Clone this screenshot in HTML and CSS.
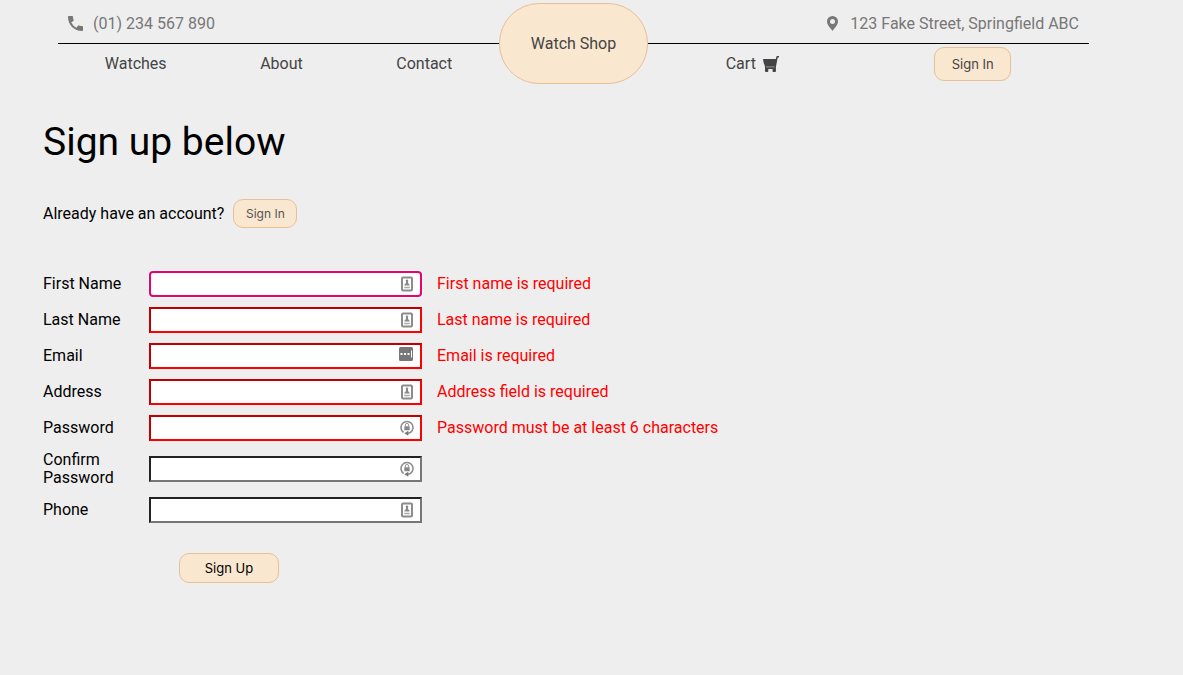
FILE: index.html
```html
<!DOCTYPE html>
<html lang="en">
<head>
  <meta charset="utf-8">
  <meta name="viewport" content="width=device-width, initial-scale=1">
  <title>Watch Shop</title>
  <link rel="stylesheet" href="styles.css">
</head>
<body>
  <svg class="sprite" aria-hidden="true">
    <symbol id="contact-card" viewBox="0 0 12 16">
      <rect x="1" y="1.500" width="10" height="13" rx="1" fill="#fff" stroke="#8c8c8c" stroke-width="2"/>
      <path d="M6 3.500a1.200 1.200 0 0 1 1 2V7l1.500 1.500V9.500h-5V8.500L5 7V5.500a1.200 1.200 0 0 1 1-2z" fill="#888"/>
      <path d="M3.200 11.500h5.600" stroke="#aaa" stroke-width="1.500"/>
    </symbol>
    <symbol id="lock-cycle" viewBox="0 0 14 16">
      <path d="M3.600 12.500A6 6 0 1 1 10.400 12.500L7.500 13.500" fill="none" stroke="#8e8e8e" stroke-width="1.600"/>
      <path d="M8.300 10.800v5L4.300 13.300z" fill="#777"/>
      <rect x="4.300" y="6.300" width="5.400" height="4" rx=".400" fill="#888"/>
      <path d="M5.400 6.500V5a1.600 1.600 0 0 1 3.200 0V6.500" fill="none" stroke="#999" stroke-width="1"/>
    </symbol>
  </svg>

  <header class="header">
    <div class="topbar">
      <span class="info">
        <svg class="icon" viewBox="0 0 15 15" aria-hidden="true"><path d="M0 .8Q0 0 .8 0H4.200Q5 0 5 .8Q5 2.500 5.600 4Q5.800 4.600 5.300 5L3.200 6.500Q5 10 8.500 11.800L10 9.700Q10.400 9.200 11 9.400Q12.500 10 14.200 10Q15 10 15 10.800V14.200Q15 15 14.200 15C6 15 0 9 0 .8z" fill="#777"/></svg>
        (01) 234 567 890
      </span>
      <span class="info">
        <svg class="icon" viewBox="0 0 15 15" aria-hidden="true"><path fill-rule="evenodd" d="M7.500 0A5.500 5.500 0 0 0 2 5.500C2 9 5.500 12 7.500 15C9.500 12 13 9 13 5.500A5.500 5.500 0 0 0 7.500 0zm0 3a2.500 2.500 0 1 1 0 5a2.500 2.500 0 1 1 0-5z" fill="#777"/></svg>
        123 Fake Street, Springfield ABC
      </span>
    </div>
    <nav class="nav nav-left">
      <a href="#watches">Watches</a>
      <a href="#about">About</a>
      <a href="#contact">Contact</a>
    </nav>
    <a class="logo" href="#home">Watch Shop</a>
    <nav class="nav nav-right">
      <a class="cart" href="#cart">Cart
        <svg class="cart-icon" viewBox="0 0 16 16" aria-hidden="true"><path d="M0 3H12.800L13.400 .800Q13.600 0 14.400 0H16V1.400H14.700L12.900 11V14.300A1.700 1.700 0 1 1 9.600 14V13H5.300V14A1.700 1.700 0 1 1 2 14V11L1.600 9Q.400 7 0 3z" fill="#444"/><path d="M3 10.900h8.500" stroke="#aaa" stroke-width=".8"/></svg>
      </a>
      <button class="button button-nav" type="button">Sign In</button>
    </nav>
  </header>

  <main class="main">
    <h1 class="title">Sign up below</h1>
    <p class="account">Already have an account? <button class="button button-small" type="button">Sign In</button></p>

    <form class="form">
      <div class="row">
        <label for="first">First Name</label>
        <span class="field"><input class="input focused" id="first" type="text"><svg class="hint" aria-hidden="true"><use href="#contact-card"/></svg></span>
        <span class="error">First name is required</span>
      </div>
      <div class="row">
        <label for="last">Last Name</label>
        <span class="field"><input class="input invalid" id="last" type="text"><svg class="hint" aria-hidden="true"><use href="#contact-card"/></svg></span>
        <span class="error">Last name is required</span>
      </div>
      <div class="row">
        <label for="email">Email</label>
        <span class="field"><input class="input invalid" id="email" type="email"><svg class="hint hint-email" viewBox="0 0 14 14" aria-hidden="true"><rect width="14" height="14" rx="1.500" fill="#777"/><path d="M1.500 6h2v2h-2zM5 6h2v2H5zM8.500 6h2v2h-2zM12 3.500h1v7h-1z" fill="#fff"/></svg></span>
        <span class="error">Email is required</span>
      </div>
      <div class="row">
        <label for="address">Address</label>
        <span class="field"><input class="input invalid" id="address" type="text"><svg class="hint" aria-hidden="true"><use href="#contact-card"/></svg></span>
        <span class="error">Address field is required</span>
      </div>
      <div class="row">
        <label for="password">Password</label>
        <span class="field"><input class="input invalid" id="password" type="password"><svg class="hint hint-lock" aria-hidden="true"><use href="#lock-cycle"/></svg></span>
        <span class="error">Password must be at least 6 characters</span>
      </div>
      <div class="row">
        <label for="confirm">Confirm Password</label>
        <span class="field"><input class="input" id="confirm" type="password"><svg class="hint hint-lock" aria-hidden="true"><use href="#lock-cycle"/></svg></span>
      </div>
      <div class="row">
        <label for="phone">Phone</label>
        <span class="field"><input class="input" id="phone" type="tel"><svg class="hint" aria-hidden="true"><use href="#contact-card"/></svg></span>
      </div>
      <button class="button button-submit" type="submit">Sign Up</button>
    </form>
  </main>
</body>
</html>
```
FILE: styles.css
```css
* {
  box-sizing: border-box;
}

body {
  margin: 0;
  background: #eee;
  color: #000;
  font-family: Roboto, Inter, sans-serif;
  font-size: 16px;
  line-height: 18px;
}

.sprite {
  display: none;
}

.header {
  display: grid;
  grid-template-columns: 1fr 149px 1fr;
  grid-template-rows: 44px 40px;
  margin: 0 94px 0 58px;
}

.topbar {
  grid-column: 1 / -1;
  grid-row: 1;
  display: flex;
  justify-content: space-between;
  align-items: center;
  padding: 4px 10px 0;
  border-bottom: 1px solid #000;
  color: #777;
}

.info {
  display: flex;
  align-items: center;
  gap: 10px;
}

.icon {
  width: 15px;
  height: 15px;
}

.nav {
  grid-row: 2;
  display: flex;
  justify-content: space-around;
  align-items: center;
}

.nav-left {
  grid-column: 1;
}

.nav-right {
  grid-column: 3;
}

.nav a,
.logo {
  color: #444;
  text-decoration: none;
}

.logo {
  grid-column: 2;
  grid-row: 1 / 3;
  display: flex;
  align-items: center;
  justify-content: center;
  margin-top: 3px;
  border: 1px solid #e8bf96;
  border-radius: 40px;
  background: #f9e7cf;
}

.cart {
  display: flex;
  align-items: center;
  gap: 7px;
}

.cart-icon {
  width: 16px;
  height: 16px;
}

.button {
  border: 1px solid #e8bf96;
  border-radius: 10px;
  background: #f9e7cf;
  color: #444;
  font-family: Inter, Roboto, sans-serif;
  font-size: 13px;
  cursor: pointer;
}

.button-nav {
  width: 77px;
  height: 34px;
}

.main {
  padding: 34px 43px;
}

.title {
  margin: 0;
  font-size: 39px;
  font-weight: 400;
  line-height: 48px;
}

.account {
  display: flex;
  align-items: center;
  gap: 9px;
  margin: 33px 0 0;
}

.button-small {
  width: 64px;
  height: 29px;
  padding: 0;
  color: #555;
  font-size: 12px;
}

.form {
  display: grid;
  gap: 10px;
  margin-top: 43px;
}

.row {
  display: grid;
  grid-template-columns: 91px 273px 1fr;
  column-gap: 15px;
  align-items: center;
}

.field {
  position: relative;
}

.input {
  display: block;
  width: 100%;
  height: 26px;
  padding: 2px 28px 2px 4px;
  border: 2px solid;
  border-color: #222 #767676 #767676 #222;
  background: #fff;
  font: inherit;
}

.invalid {
  border-color: #c00000 #f00 #f00 #c00000;
}

.focused {
  border-color: #ee006c;
  border-radius: 4px;
  box-shadow: 0 0 0 1px #fff;
}

.hint {
  position: absolute;
  top: 5px;
  right: 9px;
  width: 12px;
  height: 16px;
}

.hint-email {
  top: 4px;
  width: 14px;
  height: 14px;
}

.hint-lock {
  right: 8px;
  width: 14px;
}

.error {
  color: #f00;
}

.button-submit {
  width: 100px;
  height: 30px;
  margin: 20px 0 0 136px;
  color: #000;
}
```
